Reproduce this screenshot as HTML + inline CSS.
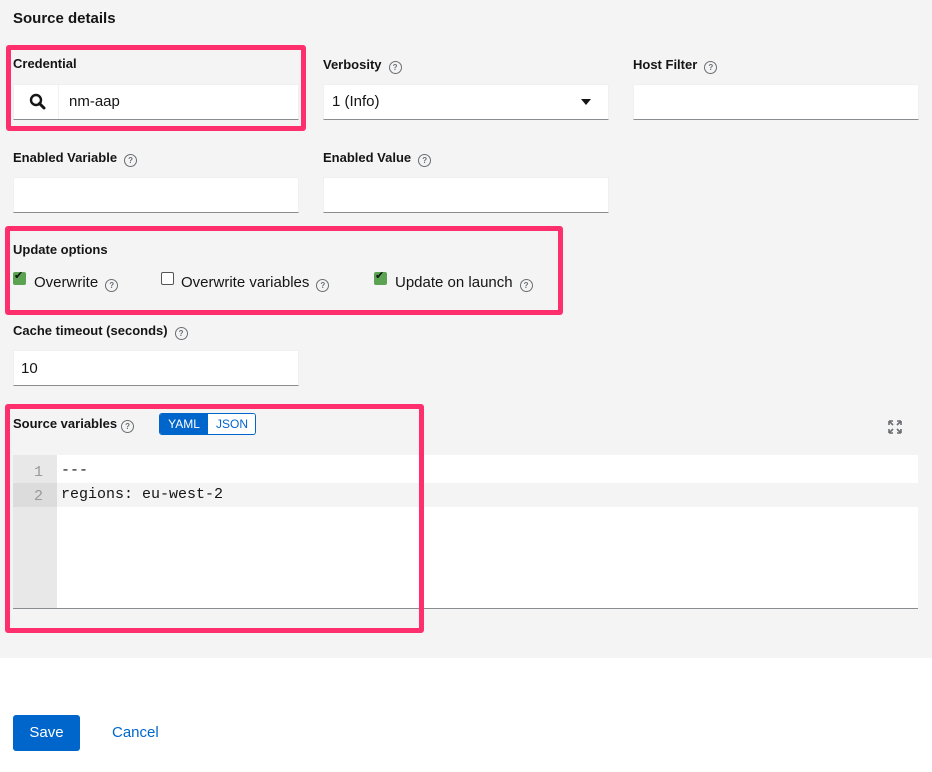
<!DOCTYPE html>
<html><head><style>
*{box-sizing:border-box;margin:0;padding:0}
body{width:932px;height:772px;background:#fff;font-family:"Liberation Sans",sans-serif;color:#151515;position:relative;overflow:hidden}
.bg{position:absolute;left:0;top:0;width:932px;height:658px;background:#f4f4f4}
.a{position:absolute}
.lbl{font-size:13px;font-weight:bold}
.inp{position:absolute;background:#fff;border:1px solid #f0f0f0;border-bottom:1px solid #8a8d90;height:36px}
.q{display:inline-block;width:13px;height:13px;border:1.3px solid #6a6e73;border-radius:50%;font-size:8px;line-height:11px;text-align:center;color:#6a6e73;font-weight:bold;vertical-align:-1px;margin-left:7px}
.pink{position:absolute;border:5px solid #ff2f6e;border-radius:3px}
.cb{position:absolute;width:13px;height:13px;border-radius:2px}
.t{font-size:15px}
</style></head><body>
<div class="bg"></div>
<div class="a" style="left:13px;top:10px;font-size:15px;font-weight:bold">Source details</div>

<div class="a lbl" style="left:13px;top:56px">Credential</div>
<div class="inp" style="left:13px;top:84px;width:286px"></div>
<div class="a" style="left:58px;top:84px;width:1px;height:35px;background:#f0f0f0"></div>
<svg class="a" style="left:29px;top:93px" width="17" height="17" viewBox="0 0 17 17"><circle cx="7" cy="7" r="5" fill="none" stroke="#151515" stroke-width="2.4"/><path d="M10.5 10.5 L15 15" stroke="#151515" stroke-width="3" stroke-linecap="round"/></svg>
<div class="a t" style="left:69px;top:93px">nm-aap</div>

<div class="a lbl" style="left:323px;top:57px">Verbosity<span class="q">?</span></div>
<div class="inp" style="left:323px;top:84px;width:286px"></div>
<div class="a t" style="left:332px;top:93px">1 (Info)</div>
<div class="a" style="left:581px;top:99px;border-left:5px solid transparent;border-right:5px solid transparent;border-top:6px solid #151515"></div>

<div class="a lbl" style="left:633px;top:57px">Host Filter<span class="q">?</span></div>
<div class="inp" style="left:633px;top:84px;width:286px"></div>

<div class="a lbl" style="left:13px;top:150px">Enabled Variable<span class="q">?</span></div>
<div class="inp" style="left:13px;top:177px;width:286px"></div>
<div class="a lbl" style="left:323px;top:150px">Enabled Value<span class="q">?</span></div>
<div class="inp" style="left:323px;top:177px;width:286px"></div>

<div class="a lbl" style="left:13px;top:242px">Update options</div>
<div class="cb" style="left:13px;top:272px;background:#5ba352"></div>
<div class="a" style="left:14px;top:269px;font-size:11px;color:#111">✔</div>
<div class="a t" style="left:34px;top:274px">Overwrite<span class="q">?</span></div>
<div class="cb" style="left:161px;top:272px;border:1px solid #555;background:#fff"></div>
<div class="a t" style="left:181px;top:274px">Overwrite variables<span class="q">?</span></div>
<div class="cb" style="left:374px;top:272px;background:#5ba352"></div>
<div class="a" style="left:375px;top:269px;font-size:11px;color:#111">✔</div>
<div class="a t" style="left:395px;top:274px">Update on launch<span class="q">?</span></div>

<div class="a lbl" style="left:13px;top:323px">Cache timeout (seconds)<span class="q">?</span></div>
<div class="inp" style="left:13px;top:350px;width:286px"></div>
<div class="a t" style="left:21px;top:360px">10</div>

<div class="a lbl" style="left:13px;top:416px">Source variables<span class="q" style="margin-left:4px">?</span></div>
<div class="a" style="left:159px;top:413px;width:97px;height:22px;border:1px solid #06c;border-radius:3px;overflow:hidden;font-size:12px">
<div class="a" style="left:0;top:0;width:48px;height:20px;background:#06c;color:#fff;text-align:center;line-height:20px">YAML</div>
<div class="a" style="left:48px;top:0;width:48px;height:20px;background:#fff;color:#06c;text-align:center;line-height:20px">JSON</div></div>
<svg class="a" style="left:888px;top:420px" width="14" height="14" viewBox="0 0 14 14" fill="none" stroke="#6a6e73" stroke-width="1.6"><path d="M1 1L5 5M13 1L9 5M1 13L5 9M13 13L9 9M1 1h4M1 1v4M13 1h-4M13 1v4M1 13h4M1 13v-4M13 13h-4M13 13v-4"/></svg>

<div class="a" style="left:13px;top:455px;width:905px;height:154px;background:#fff;border-bottom:1px solid #8a8d90"></div>
<div class="a" style="left:13px;top:455px;width:44px;height:153px;background:#e8e8e8"></div>
<div class="a" style="left:57px;top:483px;width:861px;height:24px;background:#f4f4f4"></div>
<div class="a" style="left:13px;top:483px;width:44px;height:24px;background:#dcdcdc"></div>
<div class="a" style="font-family:'Liberation Mono',monospace;font-size:15px;color:#999;left:34px;top:461px;line-height:24px">1<br>2</div>
<div class="a" style="font-family:'Liberation Mono',monospace;font-size:15px;left:61px;top:459px;line-height:24px">---<br>regions: eu-west-2</div>

<div class="pink" style="left:6px;top:45px;width:300px;height:86px"></div>
<div class="pink" style="left:5px;top:226px;width:558px;height:89px"></div>
<div class="pink" style="left:5px;top:404px;width:419px;height:229px"></div>

<div class="a" style="left:13px;top:715px;width:67px;height:36px;background:#06c;border-radius:3px;color:#fff;font-size:15px;text-align:center;line-height:36px">Save</div>
<div class="a" style="left:112px;top:724px;color:#06c;font-size:15px">Cancel</div>
</body></html>
